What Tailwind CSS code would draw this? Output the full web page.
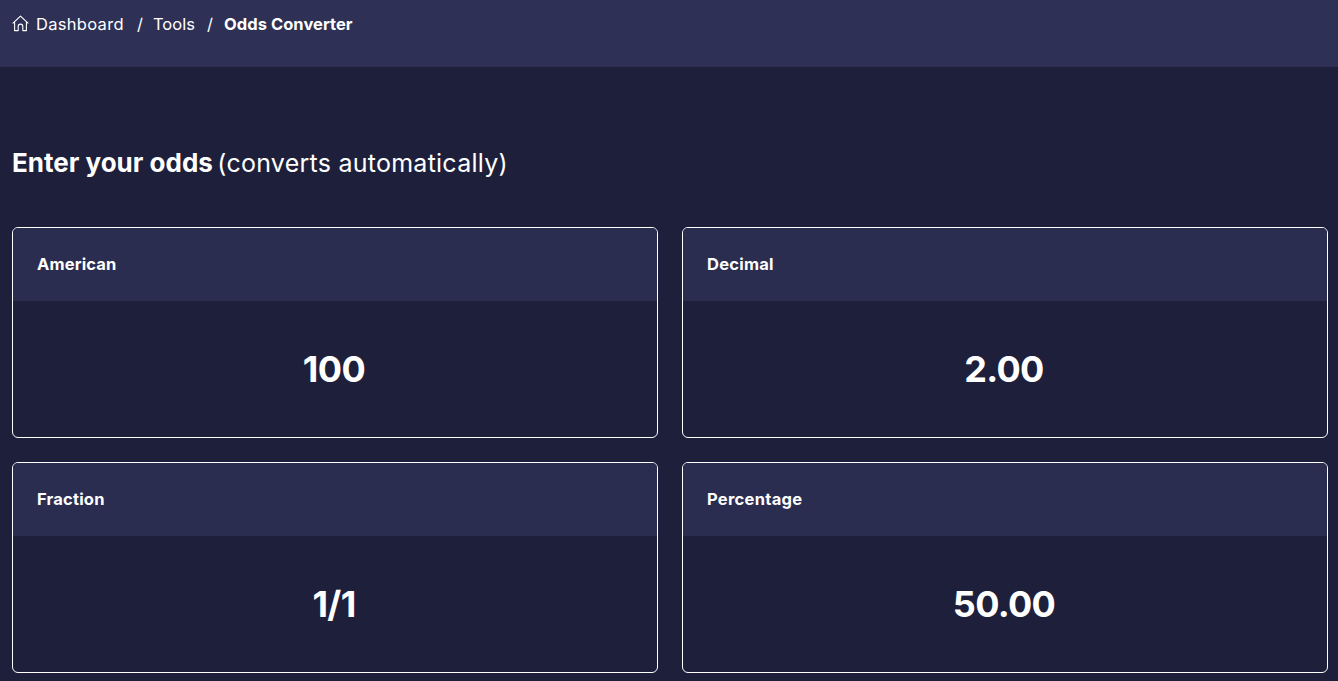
<!DOCTYPE html>
<html lang="en">
<head>
    <meta charset="UTF-8">
    <meta name="viewport" content="width=device-width, initial-scale=1.0">
    <title>Odds Converter</title>
    <script src="https://cdn.jsdelivr.net/npm/@tailwindcss/browser@4"></script>
</head>
<body class="bg-[#1e1f3b] h-[681px] overflow-hidden font-['Inter',sans-serif] text-white">
    <!-- Breadcrumb -->
    <div class="h-[67px] bg-[#2e3056] pl-[12px] pt-[15px]">
        <nav class="flex items-center h-[19px] text-[16.5px] tracking-[0.3px]">
            <svg class="w-[17px] h-[17px] mr-[7px] -mt-[3px]" viewBox="0 0 17 17" fill="none" stroke="#fff" stroke-width="1.1" stroke-linejoin="round" stroke-linecap="round">
                <path d="M1 8.2 8.5 1.2 16 8.2M2.6 7v8.6h3.6v-4.2a2.3 2.3 0 0 1 4.6 0v4.2h3.6V7"/>
            </svg>
            <span class="w-[89px]">Dashboard</span>
            <span class="ml-[12px] w-[16px]">/</span>
            <span class="w-[42px] tracking-normal">Tools</span>
            <span class="ml-[12px] w-[17px]">/</span>
            <span class="font-bold tracking-[0.05px]">Odds Converter</span>
        </nav>
    </div>

    <!-- Title -->
    <h1 class="ml-[12px] mt-[81px] h-[30px] leading-[30px]">
        <span class="font-bold text-[26px]">Enter your odds</span> <span class="text-[25px] tracking-[0.25px]">(converts automatically)</span>
    </h1>

    <!-- Cards -->
    <div class="grid grid-cols-2 gap-[24px] ml-[12px] mr-[10px] mt-[49px]">
        <div class="h-[211px] border border-white rounded-[6px] overflow-hidden">
            <div class="h-[73px] bg-[#2b2d50] flex items-center pl-[24px] font-bold text-[16.5px] tracking-[0.15px]">American</div>
            <div class="h-[136px] flex items-center justify-center pr-[2px] font-bold text-[36px] tracking-[-0.5px]">100</div>
        </div>
        <div class="h-[211px] border border-white rounded-[6px] overflow-hidden">
            <div class="h-[73px] bg-[#2b2d50] flex items-center pl-[24px] font-bold text-[16.5px] tracking-[0.25px]">Decimal</div>
            <div class="h-[136px] flex items-center justify-center pr-[2px] font-bold text-[36px] tracking-[-0.7px]">2.00</div>
        </div>
        <div class="h-[211px] border border-white rounded-[6px] overflow-hidden">
            <div class="h-[73px] bg-[#2b2d50] flex items-center pl-[24px] font-bold text-[16.5px] tracking-[0.2px]">Fraction</div>
            <div class="h-[136px] flex items-center justify-center pr-[2px] font-bold text-[36px] tracking-[-0.7px]">1/1</div>
        </div>
        <div class="h-[211px] border border-white rounded-[6px] overflow-hidden">
            <div class="h-[73px] bg-[#2b2d50] flex items-center pl-[24px] font-bold text-[16.5px] tracking-[0.3px]">Percentage</div>
            <div class="h-[136px] flex items-center justify-center pr-[2px] font-bold text-[36px] tracking-[-0.7px]">50.00</div>
        </div>
    </div>
</body>
</html>
